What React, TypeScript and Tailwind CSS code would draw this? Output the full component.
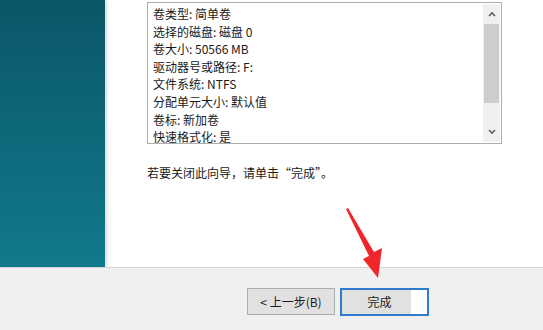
import React from "react";

const lines = [
  "卷类型: 简单卷",
  "选择的磁盘: 磁盘 0",
  "卷大小: 50566 MB",
  "驱动器号或路径: F:",
  "文件系统: NTFS",
  "分配单元大小: 默认值",
  "卷标: 新加卷",
  "快速格式化: 是",
];

export default function App() {
  return (
    <div
      className="relative w-[543px] h-[330px] overflow-hidden bg-white flex flex-col"
      style={{ fontFamily: '"Noto Sans CJK SC", "Liberation Sans", sans-serif' }}
    >
      <div className="flex h-[267px]">
        <div className="w-[105px] h-full bg-gradient-to-b from-[#0b5669] to-[#117a8b] shadow-[2px_0_3px_rgba(0,0,0,0.15)]" />
        <div className="flex-1 pl-[42px] pt-[2px]">
          <div className="w-[355px] h-[142px] border border-[#aeaeae] flex">
            <div className="flex-1 pl-[5px] pt-[2px] overflow-hidden">
              {lines.map((l) => (
                <div key={l} className="text-[12px] leading-[17.6px] text-[#1a1a1a] whitespace-nowrap">
                  {l}
                </div>
              ))}
            </div>
            <div className="w-[17px] my-[1px] mr-[1px] bg-[#f0f0f0] flex flex-col items-center">
              <div className="h-[20px] flex items-center justify-center">
                <svg width="8" height="6" viewBox="0 0 8 6">
                  <path d="M1 5 L4 2 L7 5" fill="none" stroke="#606060" strokeWidth="1.6" />
                </svg>
              </div>
              <div className="w-[15px] h-[79px] bg-[#cdcdcd]" />
              <div className="flex-1" />
              <div className="h-[20px] flex items-center justify-center">
                <svg width="8" height="6" viewBox="0 0 8 6">
                  <path d="M1 1 L4 4 L7 1" fill="none" stroke="#606060" strokeWidth="1.6" />
                </svg>
              </div>
            </div>
          </div>
          <div className="mt-[20px] text-[12px] text-[#1a1a1a]">若要关闭此向导，请单击“完成”。</div>
        </div>
      </div>
      <div className="flex-1 bg-[#f0f0f0] border-t border-[#d5d5d5] flex items-start pt-[20px] pl-[247px] gap-[5px]">
        <div className="w-[88px] h-[27px] bg-[#e1e1e1] border border-[#adadad] flex items-center justify-center text-[12px] text-[#1a1a1a]">
          &lt; 上一步(B)
        </div>
        <div className="w-[89px] h-[28px] bg-[#e5f1fb] border-2 border-[#2f7bd0] flex items-center text-[12px] text-[#1a1a1a]">
          <span className="flex-1 h-full bg-[#e1e1e1] flex items-center justify-center pl-[6px]">完成</span>
          <span className="w-[16px] h-full bg-white" />
        </div>
      </div>
      <svg className="absolute left-0 top-0" width="543" height="330" viewBox="0 0 543 330">
        <path d="M346 209 L348 208 L374 252 L382 248 L378 278 L363 259 L369 256 Z" fill="#f0262a" />
      </svg>
    </div>
  );
}
